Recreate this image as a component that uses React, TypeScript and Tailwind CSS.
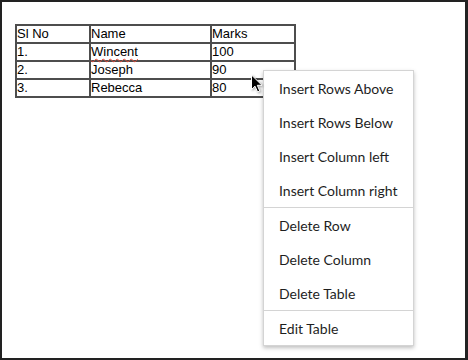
const rows = [
  ["Sl No", "Name", "Marks"],
  ["1.", "Wincent", "100"],
  ["2.", "Joseph", "90"],
  ["3.", "Rebecca", "80"],
];

const groups = [
  ["Insert Rows Above", "Insert Rows Below", "Insert Column left", "Insert Column right"],
  ["Delete Row", "Delete Column", "Delete Table"],
  ["Edit Table"],
];

function Cursor() {
  return (
    <svg
      className="absolute left-[248px] top-[72px] drop-shadow-[1px_1px_1px_rgba(0,0,0,0.35)]"
      width="14"
      height="20"
      viewBox="0 0 14 20"
    >
      <path
        d="M1.5 1 L1.5 15.5 L5 12.2 L7.6 18 L9.8 17 L7.3 11.3 L12 11.3 Z"
        fill="#000"
        stroke="#fff"
        strokeWidth="1"
        strokeLinejoin="round"
      />
    </svg>
  );
}

export default function App() {
  return (
    <div className="relative w-[468px] h-[360px] bg-white border-t-2 border-l-2 border-r-[3px] border-b-2 border-[#222] overflow-hidden">
      <div className="pl-[13px] pt-[22px]">
        <table className="border-collapse font-['Liberation_Sans',Arial,sans-serif] text-[13px] text-black">
          <tbody>
            {rows.map((r, i) => (
              <tr key={i} className="h-[18px]">
                {r.map((c, j) => (
                  <td
                    key={j}
                    className={
                      "border-2 border-[#4d4d4d] px-0 py-0 leading-[16px] align-middle " +
                      (j === 0 ? "w-[74px]" : j === 1 ? "w-[121px]" : "w-[84px]")
                    }
                  >
                    {c === "Wincent" ? (
                      <span className="underline decoration-wavy decoration-[#e04a3a] decoration-1 underline-offset-2">
                        {c}
                      </span>
                    ) : (
                      c
                    )}
                  </td>
                ))}
              </tr>
            ))}
          </tbody>
        </table>
      </div>

      {/* context menu */}
      <div className="absolute left-[261px] top-[68px] w-[151px] bg-white border border-[#d4d4d4] shadow-[0_2px_4px_rgba(0,0,0,0.25)] font-['Lato',sans-serif] text-[14px] text-[#1e1e1e]">
        {groups.map((g, gi) => (
          <div key={gi} className={gi > 0 ? "border-t border-[#d4d4d4]" : ""}>
            {g.map((label) => (
              <div key={label} className="h-[34px] flex items-center pl-[15px]">
                {label}
              </div>
            ))}
          </div>
        ))}
      </div>

      <Cursor />
    </div>
  );
}
